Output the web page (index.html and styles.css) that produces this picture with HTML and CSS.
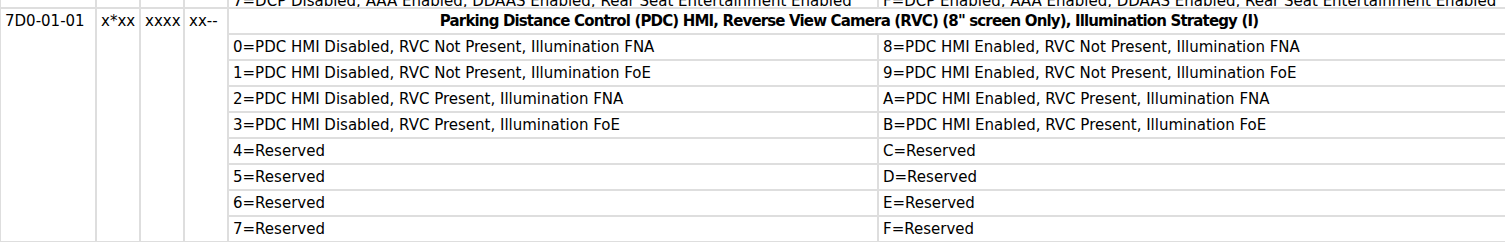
FILE: index.html
```html
<!DOCTYPE html>
<html>
<head>
<meta charset="utf-8">
<link rel="stylesheet" href="styles.css">
</head>
<body>
<div class="viewport">
<table class="grid">
  <colgroup>
    <col class="c-id">
    <col class="c-x">
    <col class="c-x">
    <col class="c-x">
    <col class="c-val">
    <col class="c-val2">
  </colgroup>
  <tbody>
    <tr class="prev">
      <td></td><td></td><td></td><td></td>
      <td>7=DCP Disabled, AAA Enabled, DDAAS Enabled, Rear Seat Entertainment Enabled</td>
      <td>F=DCP Enabled, AAA Enabled, DDAAS Enabled, Rear Seat Entertainment Enabled</td>
    </tr>
    <tr>
      <td rowspan="9" class="top">7D0-01-01</td>
      <td rowspan="9" class="top">x*xx</td>
      <td rowspan="9" class="top">xxxx</td>
      <td rowspan="9" class="top">xx--</td>
      <td colspan="2" class="head">Parking Distance Control (PDC) HMI, Reverse View Camera (RVC) (8" screen Only), Illumination Strategy (I)</td>
    </tr>
    <tr><td>0=PDC HMI Disabled, RVC Not Present, Illumination FNA</td><td>8=PDC HMI Enabled, RVC Not Present, Illumination FNA</td></tr>
    <tr><td>1=PDC HMI Disabled, RVC Not Present, Illumination FoE</td><td>9=PDC HMI Enabled, RVC Not Present, Illumination FoE</td></tr>
    <tr><td>2=PDC HMI Disabled, RVC Present, Illumination FNA</td><td>A=PDC HMI Enabled, RVC Present, Illumination FNA</td></tr>
    <tr><td>3=PDC HMI Disabled, RVC Present, Illumination FoE</td><td>B=PDC HMI Enabled, RVC Present, Illumination FoE</td></tr>
    <tr><td>4=Reserved</td><td>C=Reserved</td></tr>
    <tr><td>5=Reserved</td><td>D=Reserved</td></tr>
    <tr><td>6=Reserved</td><td>E=Reserved</td></tr>
    <tr><td>7=Reserved</td><td>F=Reserved</td></tr>
  </tbody>
</table>
</div>
</body>
</html>
```

FILE: styles.css
```css
html, body {
  margin: 0;
  padding: 0;
  background: #fff;
  overflow: hidden;
}
.viewport {
  width: 1505px;
  height: 243px;
  overflow: hidden;
}
.grid {
  margin-top: -18px;
  border-collapse: separate;
  border-spacing: 0;
  table-layout: fixed;
  width: 1530px;
  font-family: "DejaVu Sans", Verdana, sans-serif;
  font-size: 15px;
  color: #000;
}
.c-id { width: 96px; }
.c-x { width: 44px; }
.c-val { width: 650px; }
.c-val2 { width: 652px; }
.grid td {
  border: 1px solid #dedede;
  padding: 0 4px;
  height: 26px;
  line-height: 18px;
  white-space: nowrap;
  overflow: hidden;
  vertical-align: middle;
  box-sizing: border-box;
}
.grid .prev td {
  vertical-align: bottom;
  line-height: 12px;
  padding-bottom: 0;
}
.grid td.top {
  vertical-align: top;
  padding-top: 3px;
}
.grid td.head {
  font-weight: bold;
  text-align: center;
  letter-spacing: -0.85px;
  padding-right: 64px;
}
```
